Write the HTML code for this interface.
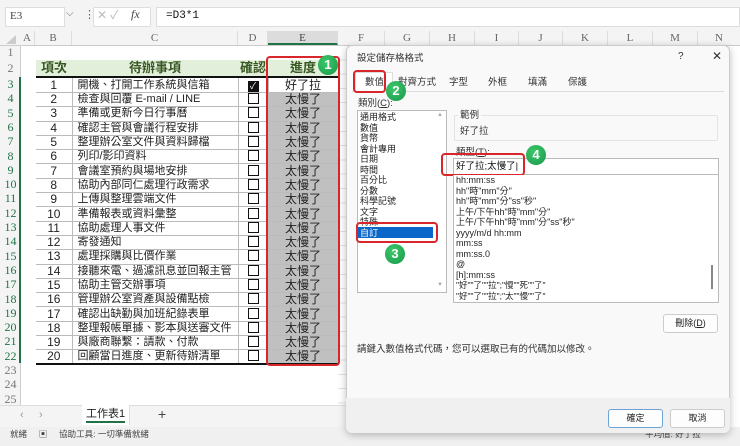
<!DOCTYPE html>
<html><head><meta charset="utf-8"><style>
*{margin:0;padding:0;box-sizing:border-box}
body{width:740px;height:446px;overflow:hidden;background:#fff;font-family:"Liberation Sans","Noto Sans CJK TC",sans-serif;position:relative;color:#222;line-height:1.15}
.a{position:absolute}
.ser{font-family:"Liberation Serif","Noto Serif CJK SC",serif}
.rh{position:absolute;left:0;width:21px;text-align:center;font-size:12px;line-height:14px;color:#777;font-family:"Liberation Serif",serif}
.ch{position:absolute;top:31px;height:14px;text-align:center;font-size:11px;line-height:14px;color:#666;font-family:"Liberation Serif",serif;border-right:1px solid #ddd}
table{border-collapse:collapse;position:absolute;left:36px;top:60px;width:302px;font-size:12px;table-layout:fixed}
td{height:14.3px;padding:0;line-height:13px;border-bottom:1px solid #bbb;border-right:1px solid #bbb;white-space:nowrap;overflow:hidden}
td.n{text-align:center}
td.t{padding-left:5px;font-size:11px}
td.c{text-align:center}
td.e{text-align:center;background:#c0c0c0;color:#222}
.box{display:inline-block;width:11px;height:11px;border:1.6px solid #111;vertical-align:-1px;line-height:8px}
th{height:17px;line-height:16px;background:#e2efda;color:#385723;font-size:13px;font-weight:bold;border-bottom:2px solid #111;overflow:hidden;white-space:nowrap}
.red{position:absolute;border:2px solid #d9262c;border-radius:4px}
.g{position:absolute;width:20px;height:20px;border-radius:50%;background:radial-gradient(circle at 40% 35%,#3cc86a,#17984a);color:#fff;font-size:13px;font-weight:bold;text-align:center;line-height:20px}
.dl{font-size:9.5px;line-height:11px;color:#333}
.li{position:absolute;left:360px;font-size:9px;line-height:10.5px;color:#222}
.ty{position:absolute;left:456px;font-size:9px;line-height:10.5px;color:#222;white-space:nowrap}
</style></head><body>
<div class="a" style="left:0;top:0;width:740px;height:30px;background:#f4f4f4"></div>
<div class="a" style="left:5px;top:7px;width:60px;height:20px;background:#fff;border:1px solid #ddd"></div>
<div class="a ser" style="left:10px;top:10px;font-size:11px;color:#444">E3</div>
<div class="a" style="left:66px;top:8px;font-size:10px;color:#666">⌵</div>
<div class="a" style="left:84px;top:9px;font-size:11px;color:#666">⋮</div>
<div class="a" style="left:93px;top:7px;width:58px;height:20px;background:#fff;border:1px solid #ddd;border-radius:2px"></div>
<div class="a" style="left:97px;top:9px;font-size:12px;color:#bbb">✕ ✓</div>
<div class="a ser" style="left:131px;top:8px;font-size:12px;font-style:italic;color:#444">fx</div>
<div class="a" style="left:156px;top:7px;width:584px;height:20px;background:#fff;border:1px solid #ddd"></div>
<div class="a" style="left:166px;top:10px;font-size:11px;color:#111;font-family:'Liberation Mono',monospace">=D3*1</div>
<div class="a" style="left:0;top:30px;width:740px;height:16px;background:#f4f4f4;border-bottom:1px solid #ccc"></div>
<div class="a" style="left:6px;top:35px;width:0;height:0;border-left:10px solid transparent;border-bottom:9px solid #ccc"></div>
<div class="ch" style="left:20px;width:15px">A</div>
<div class="ch" style="left:35px;width:37px">B</div>
<div class="ch" style="left:72px;width:166px">C</div>
<div class="ch" style="left:238px;width:30px">D</div>
<div class="ch" style="left:268px;width:70px;background:#dcdcdc;border-bottom:2px solid #217346;color:#444">E</div>
<div class="ch" style="left:338px;width:47px">F</div>
<div class="ch" style="left:385px;width:45px">G</div>
<div class="ch" style="left:430px;width:45px">H</div>
<div class="ch" style="left:475px;width:44px">I</div>
<div class="ch" style="left:519px;width:44px">J</div>
<div class="ch" style="left:563px;width:45px">K</div>
<div class="ch" style="left:608px;width:45px">L</div>
<div class="ch" style="left:653px;width:45px">M</div>
<div class="ch" style="left:698px;width:42px;border:none">N</div>
<div class="a" style="left:0;top:46px;width:21px;height:360px;background:#f4f4f4;border-right:1px solid #ccc"></div>
<div class="a" style="left:19px;top:77px;width:2px;height:286px;background:#217346"></div>
<div class="rh" style="top:45px">1</div>
<div class="rh" style="top:61px">2</div>
<div id="rhs"></div>
<div class="a" style="left:338px;top:46px;width:10px;height:360px;background:repeating-linear-gradient(#fff 0 13.3px,#e3e3e3 13.3px 14.3px)"></div>
<table>
<colgroup><col style="width:36px"><col style="width:166px"><col style="width:30px"><col style="width:70px"></colgroup>
<tr><th>項次</th><th>待辦事項</th><th>確認</th><th>進度</th></tr>
<tbody id="tb"></tbody>
</table>
<div class="red" style="left:266px;top:56px;width:74px;height:310px"></div>
<div class="g" style="left:318px;top:55px">1</div>
<div class="a" style="left:0;top:405px;width:346px;height:22px;background:#f4f4f4;border-top:1px solid #ddd"></div>
<div class="a" style="left:20px;top:409px;font-size:11px;color:#999">‹&nbsp;&nbsp;&nbsp;&nbsp;&nbsp;›</div>
<div class="a" style="left:82px;top:405px;width:48px;height:20px;background:#fff;border-right:1px solid #ddd"></div>
<div class="a" style="left:86px;top:408px;font-size:11px;color:#222;border-bottom:2px solid #217346">工作表1</div>
<div class="a" style="left:158px;top:406px;font-size:14px;color:#444">+</div>
<div class="a" style="left:0;top:427px;width:740px;height:19px;background:#f0f0f0"></div>
<div class="a" style="left:10px;top:430px;font-size:8.5px;color:#444">就緒&nbsp;&nbsp;&nbsp;&nbsp;&nbsp;▣&nbsp;&nbsp;&nbsp;&nbsp;&nbsp;協助工具: 一切準備就緒</div>
<div class="a" style="left:645px;top:430px;font-size:8.5px;color:#444">平均值: 好了拉</div>
<div class="a" style="left:346px;top:45px;width:384px;height:388px;background:#f9f9f9;border:1px solid #ccc;border-radius:6px;box-shadow:0 2px 8px rgba(0,0,0,.25)"></div>
<div class="a" style="left:346px;top:398px;width:384px;height:35px;background:#f0f0f0;border-radius:0 0 6px 6px"></div>
<div class="a dl" style="left:357px;top:53px">設定儲存格格式</div>
<div class="a" style="left:678px;top:51px;font-size:10px;color:#333">?</div>
<div class="a" style="left:712px;top:50px;font-size:12px;color:#333">✕</div>
<div class="a" style="left:352px;top:91px;width:372px;height:1px;background:#ddd"></div>
<div class="a" style="left:355px;top:72px;width:38px;height:20px;background:#fff;border:1px solid #ddd;border-bottom:none"></div>
<div class="a dl" style="left:365px;top:77px">數值</div>
<div class="a dl" style="left:398px;top:77px">對齊方式</div>
<div class="a dl" style="left:449px;top:77px">字型</div>
<div class="a dl" style="left:488px;top:77px">外框</div>
<div class="a dl" style="left:528px;top:77px">填滿</div>
<div class="a dl" style="left:568px;top:77px">保護</div>
<div class="red" style="left:353px;top:70px;width:33px;height:23px"></div>
<div class="g" style="left:386px;top:81px">2</div>
<div class="a dl" style="left:358px;top:98px">類別(<u>C</u>):</div>
<div class="a" style="left:357px;top:110px;width:90px;height:183px;background:#fff;border:1px solid #bbb"></div>
<div class="a" style="left:437px;top:112px;font-size:6px;color:#aaa">▲</div>
<div class="a" style="left:437px;top:282px;font-size:6px;color:#aaa">▼</div>
<div class="a" style="left:358px;top:227px;width:75px;height:11px;background:#0a66c8"></div>
<div class="li" style="top:112px">通用格式</div>
<div class="li" style="top:122.5px">數值</div>
<div class="li" style="top:133px">貨幣</div>
<div class="li" style="top:143.5px">會計專用</div>
<div class="li" style="top:154px">日期</div>
<div class="li" style="top:164.5px">時間</div>
<div class="li" style="top:175px">百分比</div>
<div class="li" style="top:185.5px">分數</div>
<div class="li" style="top:196px">科學記號</div>
<div class="li" style="top:206.5px">文字</div>
<div class="li" style="top:217px">特殊</div>
<div class="li" style="top:227.5px;color:#fff">自訂</div>
<div class="red" style="left:356px;top:222px;width:82px;height:21px"></div>
<div class="g" style="left:385px;top:244px">3</div>
<div class="a" style="left:454px;top:115px;width:264px;height:26px;border:1px solid #e3e3e3;border-radius:2px"></div>
<div class="a dl" style="left:458px;top:110px;background:#f9f9f9;padding:0 2px">範例</div>
<div class="a dl" style="left:460px;top:126px">好了拉</div>
<div class="a dl" style="left:456px;top:147px">類型(<u>T</u>):</div>
<div class="a" style="left:453px;top:158px;width:266px;height:17px;background:#fff;border:1px solid #bbb"></div>
<div class="a dl" style="left:456px;top:161px;color:#111">好了拉;太慢了|</div>
<div class="red" style="left:441px;top:153px;width:84px;height:23px"></div>
<div class="g" style="left:526px;top:145px">4</div>
<div class="a" style="left:453px;top:175px;width:266px;height:128px;background:#fff;border:1px solid #bbb;border-top:none"></div>
<div class="a" style="left:711px;top:265px;width:2px;height:24px;background:#888"></div>
<div class="ty" style="top:175px">hh:mm:ss</div>
<div class="ty" style="top:185.5px">hh"時"mm"分"</div>
<div class="ty" style="top:196px">hh"時"mm"分"ss"秒"</div>
<div class="ty" style="top:206.5px">上午/下午hh"時"mm"分"</div>
<div class="ty" style="top:217px">上午/下午hh"時"mm"分"ss"秒"</div>
<div class="ty" style="top:227.5px">yyyy/m/d hh:mm</div>
<div class="ty" style="top:238px">mm:ss</div>
<div class="ty" style="top:248.5px">mm:ss.0</div>
<div class="ty" style="top:259px">@</div>
<div class="ty" style="top:269.5px">[h]:mm:ss</div>
<div class="ty" style="top:280px;font-size:8.5px">"好""了""拉";"慢""死""了"</div>
<div class="ty" style="top:290.5px;font-size:8.5px">"好""了""拉";"太""慢""了"</div>
<div class="a" style="left:663px;top:314px;width:55px;height:19px;background:#fdfdfd;border:1px solid #ccc;border-radius:3px;font-size:9px;text-align:center;line-height:17px">刪除(<u>D</u>)</div>
<div class="a dl" style="left:357px;top:344px">請鍵入數值格式代碼，您可以選取已有的代碼加以修改。</div>
<div class="a" style="left:608px;top:409px;width:55px;height:19px;background:#fdfdfd;border:1px solid #6fa3d8;border-radius:3px;font-size:9px;text-align:center;line-height:17px">確定</div>
<div class="a" style="left:670px;top:409px;width:55px;height:19px;background:#fdfdfd;border:1px solid #ccc;border-radius:3px;font-size:9px;text-align:center;line-height:17px">取消</div>
<script>
var items=["開機、打開工作系統與信箱","檢查與回覆 E-mail / LINE","準備或更新今日行事曆","確認主管與會議行程安排","整理辦公室文件與資料歸檔","列印/影印資料","會議室預約與場地安排","協助內部同仁處理行政需求","上傳與整理雲端文件","準備報表或資料彙整","協助處理人事文件","寄發通知","處理採購與比價作業","接聽來電、過濾訊息並回報主管","協助主管交辦事項","管理辦公室資產與設備點檢","確認出缺勤與加班紀錄表單","整理報帳單據、影本與送審文件","與廠商聯繫：請款、付款","回顧當日進度、更新待辦清單"];
var h="";
for(var i=0;i<20;i++){
var last=i==19?' style="border-bottom:2px solid #111"':'';
h+='<tr><td class="n"'+last+'>'+(i+1)+'</td><td class="t"'+last+'>'+items[i]+'</td><td class="c"'+last+'>'+(i==0?'<span class="box" style="background:#111;color:#fff;font-size:9px">✓</span>':'<span class="box"></span>')+'</td><td class="e"'+(i==0?' style="background:#fff"':last)+'>'+(i==0?'好了拉':'太慢了')+'</td></tr>';
}
document.getElementById("tb").innerHTML=h;
var r="";
for(var n=3;n<=25;n++){r+='<div class="rh" style="top:'+(77+(n-3)*14.3)+'px;'+(n<=22?'color:#217346':'')+'">'+n+'</div>';}
document.getElementById("rhs").innerHTML=r;
</script>
</body></html>
